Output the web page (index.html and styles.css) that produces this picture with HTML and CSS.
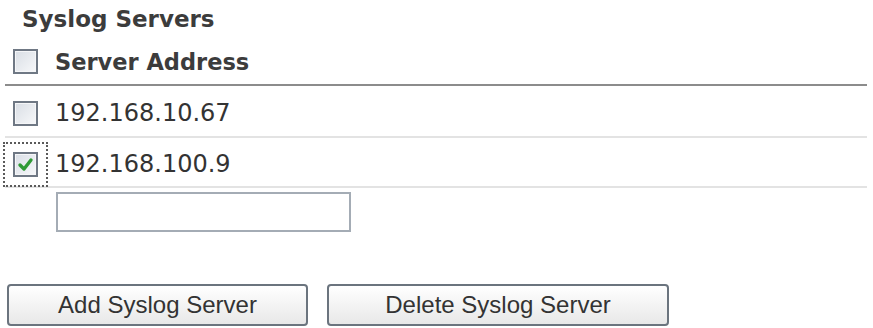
FILE: index.html
```html
<!DOCTYPE html>
<html lang="en">
<head>
  <meta charset="UTF-8">
  <title>Syslog Servers</title>
  <link rel="stylesheet" href="styles.css">
</head>
<body>

  <h2 class="title">Syslog Servers</h2>

  <div class="server-list">
    <div class="row head">
      <span class="box"></span>
      <span class="label">Server Address</span>
    </div>
    <div class="row">
      <span class="box"></span>
      <span class="addr">192.168.10.67</span>
    </div>
    <div class="row last">
      <span class="box checked focus">
        <svg width="21" height="21" viewBox="0 0 21 21">
          <polyline points="5,11 9,15 16,6" fill="none" stroke="#2f9a36" stroke-width="3.4" stroke-linecap="round" stroke-linejoin="round"/>
        </svg>
      </span>
      <span class="addr">192.168.100.9</span>
    </div>
    <div class="new-row">
      <input type="text" class="addr-input">
    </div>
  </div>

  <div class="actions">
    <button class="btn add">Add Syslog Server</button>
    <button class="btn delete">Delete Syslog Server</button>
  </div>

</body>
</html>
```

FILE: styles.css
```css
html {
  background: #fff;
  font-family: 'DejaVu Sans', Verdana, sans-serif;
  color: #333;
}

body {
  margin: 0;
}

.title {
  margin: 0 0 0 22px;
  padding-top: 5px;
  font-size: 23px;
  line-height: 28px;
  font-weight: bold;
  color: #3c3c3c;
}

.server-list {
  margin-left: 5px;
  width: 862px;
}

.row {
  display: flex;
  align-items: center;
  gap: 17px;
  padding: 4px 0 0 8px;
  height: 46px;
  border-bottom: 2px solid #e3e3e3;
}

.row.head {
  padding-top: 6px;
  height: 45px;
  border-bottom: 2px solid #8c8c8c;
}

.row.last {
  height: 44px;
}

.label {
  font-size: 22.5px;
  font-weight: bold;
  color: #3c3c3c;
}

.addr {
  font-size: 24px;
  color: #333;
}

.box {
  box-sizing: border-box;
  width: 25px;
  height: 25px;
  flex: none;
  display: flex;
  align-items: center;
  justify-content: center;
  border: 2px solid #6f7884;
  box-shadow: inset 0 0 0 1px #f5f6f8;
  background: linear-gradient(135deg, #d9dee5, #f7f8fa);
}

.box.focus {
  outline: 2px dotted #5a5a5a;
  outline-offset: 8px;
}

.new-row {
  padding: 4px 0 0 51px;
}

.addr-input {
  box-sizing: border-box;
  width: 295px;
  height: 40px;
  margin: 0;
  border: 2px solid #a4acb5;
  background: #fff;
}

.actions {
  display: flex;
  gap: 19px;
  margin: 52px 0 0 7px;
}

.btn {
  box-sizing: border-box;
  height: 42px;
  padding: 0;
  border: 2px solid #6b747e;
  border-radius: 4px;
  background: linear-gradient(#ffffff, #e8e8e8);
  font-family: 'Liberation Sans', Arial, sans-serif;
  font-size: 24px;
  color: #333;
}

.btn.add {
  width: 301px;
}

.btn.delete {
  width: 342px;
}
```
